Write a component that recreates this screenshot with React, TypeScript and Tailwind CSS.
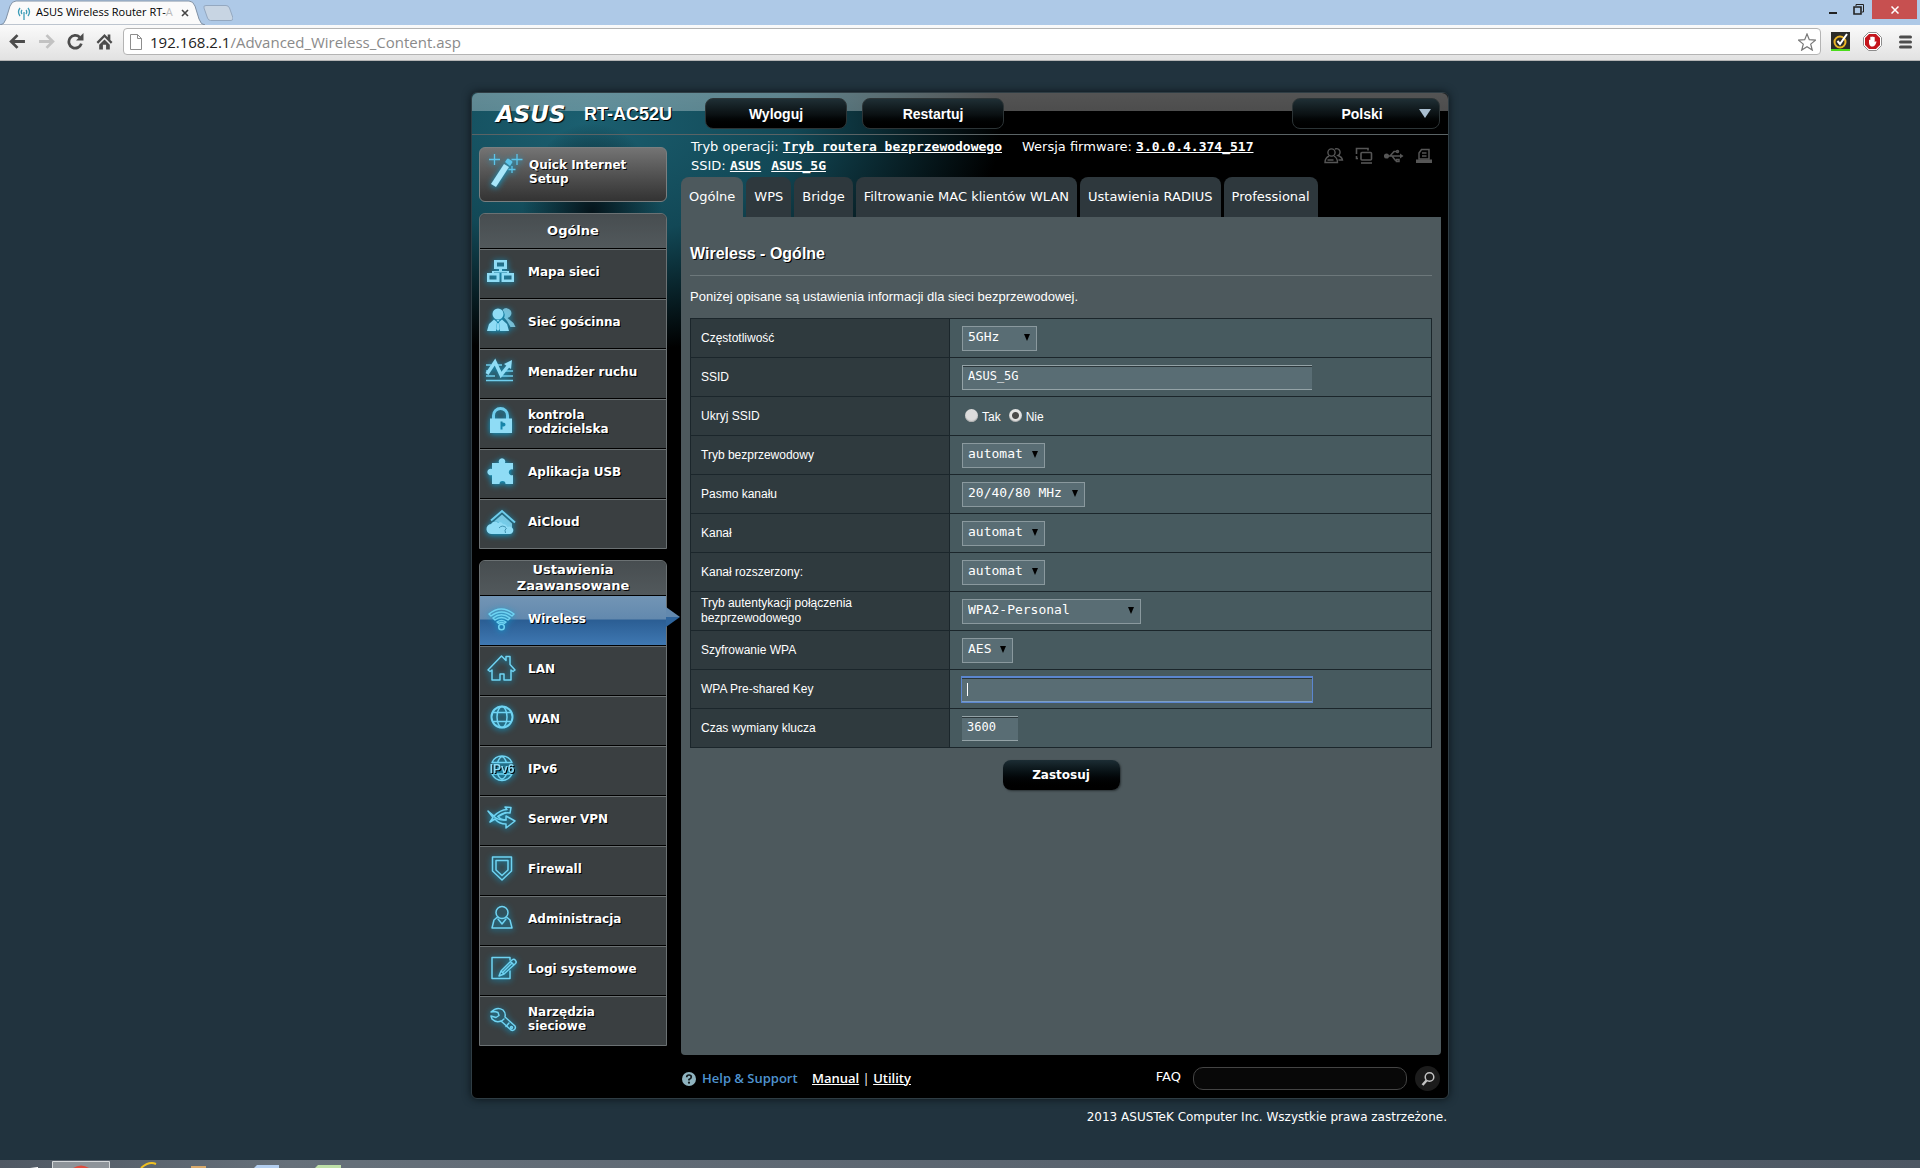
import type { ReactNode } from "react";
import clsx from "clsx";

const verdana = "font-['DejaVu_Sans',sans-serif]";
const arial = "font-['Liberation_Sans',sans-serif]";
const lucida = "font-['DejaVu_Sans_Mono',monospace]";
const segoe = "font-['Open_Sans',sans-serif]";

const shadow = "[text-shadow:1px_1px_0_#000]";
const glow = "size-[30px] shrink-0 overflow-visible drop-shadow-[0_1px_3px_#0aa5d8]";

function SolidIcon({ children }: { children: ReactNode }) {
  return (
    <svg viewBox="0 0 30 30" className={glow} fill="#8fdcf5" aria-hidden="true">
      {children}
    </svg>
  );
}

function LineIcon({ children }: { children: ReactNode }) {
  return (
    <svg
      viewBox="0 0 30 30"
      className={glow}
      fill="none"
      stroke="#6fd3f2"
      strokeWidth="1.5"
      strokeLinejoin="round"
      strokeLinecap="round"
      aria-hidden="true"
    >
      {children}
    </svg>
  );
}

const WandIcon = () => (
  <svg viewBox="0 0 34 36" className="h-9 w-[34px] shrink-0 overflow-visible drop-shadow-[0_1px_3px_#0aa5d8]" aria-hidden="true">
    <path d="M3 30 16 10l5 3L8 33z" fill="#a9e6fa" />
    <path d="m17 8 2-3q1-1 2 0l3 2q1 1 0 2l-2 3z" fill="#5cc4ea" />
    <path d="M6.500 0v11M1 5.500h11M29 0v11M23.500 5.500h11M24 12v7M20.500 15.500h7" stroke="#5cc4ea" strokeWidth="1.300" />
  </svg>
);

const general = [
  {
    label: "Mapa sieci",
    icon: (
      <SolidIcon>
        <path fillRule="evenodd" d="M8 3h13v9h-5v2h7v2h5v9H15.500v-9H21v-.5H8v.5h5.500v9H1v-9h5v-2h7v-2H8zm3 2.500V9.500h7V5.500zM3.500 18.500v4h7v-4zm14.500 0v4h7.500v-4z" />
      </SolidIcon>
    ),
  },
  {
    label: "Sieć gościnna",
    icon: (
      <SolidIcon>
        <path d="M16.500 3a5 5 0 1 1 5 8l6 5 2 4h-5l-3.500-6-3-3.500q2-4-1.500-7.500z" opacity=".75" />
        <circle cx="12" cy="7" r="5.500" />
        <path d="M8 12.500 3 17l-2 7h9l1-9zM16 12.500l5 4.500 2 7h-9l-1-9z" />
        <path d="m10.500 13 1.500 2 1.500-2zM11.300 16h1.400l1 6-1.700 2-1.700-2z" />
      </SolidIcon>
    ),
  },
  {
    label: "Menadżer ruchu",
    icon: (
      <SolidIcon>
        <path d="M0 8h5M11 8h5M0 14h2M12 14h3M19 14h8M0 19h9M16 19h11M0 23.500h27" stroke="#6fcdec" strokeWidth="1.600" />
        <path d="m1 17 8-12 6 13 8-10" stroke="#8fdcf5" strokeWidth="3.500" fill="none" />
        <path d="m18 7 8-4-1 9z" />
      </SolidIcon>
    ),
  },
  {
    label: "kontrola rodzicielska",
    icon: (
      <SolidIcon>
        <path d="M7.500 12V8.500a7 7 0 0 1 14 0V12" fill="none" stroke="#6fcdec" strokeWidth="3" />
        <path fillRule="evenodd" d="M4 11.500h22V26H4zm10.500 3v8h2v-3q3 0 3-2t-3-2v-1z" />
      </SolidIcon>
    ),
  },
  {
    label: "Aplikacja USB",
    icon: (
      <SolidIcon>
        <path d="M6 6h7a3.300 3.300 0 1 1 6 0h8v6.500a3 3 0 1 0 0 5.500v9h-7.500a3 3 0 1 0-6 0H6v-9a3.300 3.300 0 1 1 0-6z" />
      </SolidIcon>
    ),
  },
  {
    label: "AiCloud",
    icon: (
      <SolidIcon>
        <path d="m5 13.500 11-9.500 13 11.500" fill="none" stroke="#6fcdec" strokeWidth="2" />
        <path d="m8 14.500 8-7 10 9V21l-9-1-4-5z" opacity=".8" />
        <path d="M6 27a5 5 0 0 1-1-10q3-4 7-1.500 3-1.500 5 1.500 3 0 4.500 3a3.800 3.800 0 1 1 2.500 7z" />
        <path d="M13 21q3-3.500 7-.5M19.500 26q-1.500-3 1-5" fill="none" stroke="#2b7f9e" strokeWidth=".8" />
      </SolidIcon>
    ),
  },
];

const advanced = [
  {
    label: "Wireless",
    active: true,
    icon: (
      <LineIcon>
        <path d="M3 10q12-10 25 0l-2 2q-10.500-8-21 0zM7 14q8.500-6.500 17 0l-2 2q-6.500-5-13 0zM11 18q4.500-3 9 0l-1.500 1.300q-3-1.500-6 0z" />
        <circle cx="15.500" cy="23" r="2.800" />
      </LineIcon>
    ),
  },
  {
    label: "LAN",
    icon: (
      <LineIcon>
        <path d="M2 16 15.500 2l4.500 4.500V2.500h4v8l5 5.500-2 1.500-2-1.500v10h-7v-6h-4v6H6V16l-2 1.500z" />
      </LineIcon>
    ),
  },
  {
    label: "WAN",
    icon: (
      <LineIcon>
        <circle cx="16" cy="13" r="10.500" strokeWidth="2" />
        <ellipse cx="16" cy="13" rx="5" ry="10.500" />
        <path d="M7.500 8.500h17M7.500 17.500h17" />
      </LineIcon>
    ),
  },
  {
    label: "IPv6",
    icon: (
      <LineIcon>
        <path d="M6 8.500a11 11 0 0 1 20 0M6 20a11 11 0 0 0 20 0M11.500 8.500Q16-3 20.500 8.500M11.500 20q4.500 10 9 0M6 8.500h20M6 20h20" />
        <text
          x="16"
          y="18.500"
          textAnchor="middle"
          fill="#8fdcf5"
          stroke="none"
          fontFamily="Liberation Sans, sans-serif"
          fontWeight="700"
          fontSize="12"
        >
          IPv6
        </text>
      </LineIcon>
    ),
  },
  {
    label: "Serwer VPN",
    icon: (
      <LineIcon>
        <path d="m2 7 6 5q6-6 13-6.500L19 3l6 .5L24 9q-7-1-12 3.500 3 3.500 8 3.500v-4l9 5-9 7v-4q-7 0-11-5l-5 3 3-4.500z" />
        <path d="M8 12.500q4 4 12 3.500M12 12.500l8-4" />
      </LineIcon>
    ),
  },
  {
    label: "Firewall",
    icon: (
      <LineIcon>
        <path d="M6.500 3h19v14L16 26l-9.500-9z" />
        <path d="M10 6.500h12V16l-6 5.500-6-5.500z" />
      </LineIcon>
    ),
  },
  {
    label: "Administracja",
    icon: (
      <LineIcon>
        <circle cx="16" cy="8.500" r="6" />
        <path d="M11.500 13 8 16l-2 8h20l-2-8-3.500-3M12 15l4 5 4-5" />
      </LineIcon>
    ),
  },
  {
    label: "Logi systemowe",
    icon: (
      <LineIcon>
        <path d="M22 3.500H6v21h18V17M24 6V3.500h-2" />
        <path d="m13 22 2-5L26 6q2-1.500 3.500.5Q31 8 29.500 9.500L18 20zM15 17l3 3M24.500 7.500l3.500 3.500M17 18 25.500 9.500" />
      </LineIcon>
    ),
  },
  {
    label: "Narzędzia sieciowe",
    icon: (
      <LineIcon>
        <path d="M5 8q6-6 12-2 3 3 2 7l10 9q1 2-.5 3.500t-3.500.5l-10-9q-5 2-9-2l-1-3 5 1.500 3-2-1-3-3-1z" />
        <path d="m18 15-3 2.500M23 19l-3 3.500" />
        <circle cx="25.500" cy="23.500" r="1" />
      </LineIcon>
    ),
  },
];

type MenuItem = { label: string; icon: ReactNode; active?: boolean };

function SideMenu({ title, items }: { title: string; items: MenuItem[] }) {
  return (
    <section className="rounded-t-md border border-[#6b7173] bg-[#3a3f41]">
      <h2
        className={clsx(
          "flex h-[34px] items-center justify-center rounded-t-md bg-linear-to-b from-[#474d50] to-[#52595c] px-5 text-center text-[13px] leading-4 font-bold text-white",
          shadow
        )}
      >
        {title}
      </h2>
      <ul>
        {items.map((item) => (
          <li key={item.label} className="relative">
            <a
              href="#"
              className={clsx(
                "flex h-[50px] items-center gap-3 border-t border-black pr-6 pb-1 pl-1.5 text-xs leading-[14px] font-bold text-white",
                item.active
                  ? "bg-[linear-gradient(#7295b5_0,#6389ae_46%,#2b5e94_50%,#3f78b2_100%)]"
                  : "shadow-[inset_0_1px_0_#6b7173]",
                shadow
              )}
            >
              {item.icon}
              <span>{item.label}</span>
            </a>
            {item.active && (
              <svg viewBox="0 0 14 20" className="absolute top-3 left-full h-5 w-3.5" aria-hidden="true">
                <path d="M0 0 14 10H0z" fill="#6389ae" />
                <path d="M0 20 14 10H0z" fill="#2f659d" />
              </svg>
            )}
          </li>
        ))}
      </ul>
    </section>
  );
}

const topButton =
  "h-[31px] rounded-lg border border-[#2c3436] bg-linear-to-b from-[#1f2f35] via-[#0a1012] via-55% to-black text-sm font-bold text-white";

function Header() {
  return (
    <header className="flex h-[42px] items-center rounded-t-md border-b border-[#5a6365] bg-[linear-gradient(rgba(255,255,255,0.33)_0,rgba(255,255,255,0.3)_18px,transparent_18px)] pr-2 pl-6">
      <span className={clsx(verdana, "w-[88px] text-[23px] leading-6 font-bold text-white italic [text-shadow:1px_1px_1px_#000]")}>ASUS</span>
      <span className={clsx(arial, shadow, "w-[121px] text-lg font-bold text-white")}>RT-AC52U</span>
      <button type="button" className={clsx(arial, topButton, "mr-[15px] w-[142px]")}>
        Wyloguj
      </button>
      <button type="button" className={clsx(arial, topButton, "w-[142px]")}>
        Restartuj
      </button>
      <button type="button" className={clsx(arial, topButton, "relative ml-auto w-[148px]")}>
        <span className="pr-2">Polski</span>
        <svg viewBox="0 0 12 9" className="absolute top-2.5 right-2 h-[9px] w-3" aria-hidden="true">
          <path d="M0 0h12L6 9z" fill="#a9bed0" />
        </svg>
      </button>
    </header>
  );
}

function StatusIcons() {
  return (
    <div className="mt-3 mr-2 flex gap-[11px]" aria-hidden="true">
      <svg viewBox="0 0 20 18" className="h-[18px] w-5" fill="none" stroke="#565656" strokeWidth="1.400">
        <circle cx="7.500" cy="5.500" r="3.600" />
        <path d="M5 9q-4 2-4 6.500h12.500Q13.500 11 10 9M11 2a3.300 3.300 0 1 1 3 6.500q4 1.500 4.500 4.500h-4M3.500 13h6" />
      </svg>
      <svg viewBox="0 0 18 18" className="size-[18px]" fill="none" stroke="#565656" strokeWidth="1.600">
        <path d="M3 11.500H1.500V9M1.500 7V1.500H13v2" />
        <rect x="6" y="5.500" width="10.500" height="7.500" rx="1" />
        <path d="M6 16h11" />
      </svg>
      <svg viewBox="0 0 20 18" className="h-[18px] w-5" fill="none" stroke="#565656" strokeWidth="1.500">
        <path d="M3 9h14M6 9l4-4.500h3M8 9l3.500 4.500H13" />
        <circle cx="2.500" cy="9" r="1.800" fill="#565656" />
        <path d="m16 6.500 3.500 2.500-3.500 2.500z" fill="#565656" stroke="none" />
        <circle cx="13.500" cy="4.500" r="1" />
        <path d="M12.500 12.500h2.500v2h-2.500z" />
      </svg>
      <svg viewBox="0 0 18 18" className="size-[18px]" fill="none" stroke="#565656" strokeWidth="1.500">
        <path d="M4 12V6l2.500-3.500H14V12zM7 6h4.500M7 9h4.500" />
        <path d="M1 12.500h16V16H1z" fill="#565656" stroke="none" />
      </svg>
    </div>
  );
}

function InfoBar() {
  const link = clsx(lucida, "font-bold underline");
  return (
    <div className="flex h-[42px] items-start justify-between pl-2.5 text-[13px] leading-[19px] text-white">
      <div className="pt-0.5">
        <p>
          Tryb operacji:{" "}
          <a href="#" className={link}>
            Tryb routera bezprzewodowego
          </a>
          <span className="ml-5">Wersja firmware: </span>
          <a href="#" className={link}>
            3.0.0.4.374_517
          </a>
        </p>
        <p>
          SSID:{" "}
          <a href="#" className={link}>
            ASUS
          </a>
          <a href="#" className={clsx(link, "ml-2.5")}>
            ASUS_5G
          </a>
        </p>
      </div>
      <StatusIcons />
    </div>
  );
}

const tabs = ["Ogólne", "WPS", "Bridge", "Filtrowanie MAC klientów WLAN", "Ustawienia RADIUS", "Professional"];

function Tabs() {
  return (
    <nav className="flex gap-[3px]">
      {tabs.map((tab, i) => (
        <a
          key={tab}
          href="#"
          className={clsx(
            "flex h-10 items-center rounded-t-lg px-2 text-[13px] whitespace-nowrap text-white",
            i === 0 ? "bg-[#4d595d]" : "bg-[#2e383d]"
          )}
        >
          {tab}
        </a>
      ))}
    </nav>
  );
}

function Row({ label, htmlFor, children }: { label: string; htmlFor?: string; children: ReactNode }) {
  return (
    <tr className="h-[39px]">
      <th
        scope="row"
        className={clsx(arial, "w-[259px] border border-[#1b262b] bg-[#2f3a3e] pr-20 pl-2.5 text-left text-xs leading-[15px] font-normal text-white")}
      >
        <label htmlFor={htmlFor}>{label}</label>
      </th>
      <td className="border border-[#1b262b] bg-[#475a5f] pl-3">{children}</td>
    </tr>
  );
}

function Select({ id, options, className }: { id: string; options: string[]; className: string }) {
  return (
    <div className={clsx("relative h-[25px]", className)}>
      <select
        id={id}
        className={clsx(lucida, "block h-full w-full appearance-none border border-[#8a999e] bg-[#596d74] pb-0.5 pl-[5px] text-[13px] text-white")}
      >
        {options.map((o) => (
          <option key={o}>{o}</option>
        ))}
      </select>
      <svg viewBox="0 0 6 7" className="pointer-events-none absolute top-2 right-[7px] h-[7px] w-1.5" aria-hidden="true">
        <path d="M0 0h6L3 7z" fill="#000" />
      </svg>
    </div>
  );
}

const field =
  "block h-[25px] border-y bg-[#596d74] pb-0.5 pl-[5px] text-xs text-white outline-none shadow-[inset_0_1px_0_#2b373b]";
const radio =
  "mb-0.5 size-[13px] appearance-none rounded-full bg-[#dcdcdc] shadow-[inset_0_-1px_1px_#aaa] checked:bg-[radial-gradient(#4a4a4a_0_3px,#e4e4e4_4px)]";

function SettingsTable() {
  return (
    <table className="mt-3 w-full border-collapse">
      <tbody>
        <Row label="Częstotliwość" htmlFor="band">
          <Select id="band" options={["5GHz", "2.4GHz"]} className="w-[75px]" />
        </Row>
        <Row label="SSID" htmlFor="ssid">
          <input id="ssid" defaultValue="ASUS_5G" className={clsx(lucida, field, "w-[350px] max-w-full border-l border-[#94a3a7]")} />
        </Row>
        <Row label="Ukryj SSID">
          <div className={clsx(arial, "flex items-center pl-[3px] text-xs text-white")}>
            <input type="radio" id="hide-yes" name="hide" className={radio} />
            <label htmlFor="hide-yes" className="pt-0.5 pr-2 pl-1">
              Tak
            </label>
            <input type="radio" id="hide-no" name="hide" defaultChecked className={radio} />
            <label htmlFor="hide-no" className="pt-0.5 pl-1">
              Nie
            </label>
          </div>
        </Row>
        <Row label="Tryb bezprzewodowy" htmlFor="mode">
          <Select id="mode" options={["automat"]} className="w-[83px]" />
        </Row>
        <Row label="Pasmo kanału" htmlFor="width">
          <Select id="width" options={["20/40/80 MHz"]} className="w-[123px]" />
        </Row>
        <Row label="Kanał" htmlFor="channel">
          <Select id="channel" options={["automat"]} className="w-[83px]" />
        </Row>
        <Row label="Kanał rozszerzony:" htmlFor="ext-channel">
          <Select id="ext-channel" options={["automat"]} className="w-[83px]" />
        </Row>
        <Row label="Tryb autentykacji połączenia bezprzewodowego" htmlFor="auth">
          <Select id="auth" options={["WPA2-Personal"]} className="w-[179px]" />
        </Row>
        <Row label="Szyfrowanie WPA" htmlFor="crypto">
          <Select id="crypto" options={["AES"]} className="w-[51px]" />
        </Row>
        <Row label="WPA Pre-shared Key" htmlFor="psk">
          <div className="relative w-[350px] max-w-full">
            <input
              id="psk"
              autoFocus
              className={clsx(lucida, field, "w-full border-t-[#5b86cf] border-b-[#7d9fc4] caret-transparent ring-1 ring-[#5b86cf]")}
            />
            <span className="absolute top-[6px] left-[5px] h-[13px] w-px bg-white" />
          </div>
        </Row>
        <Row label="Czas wymiany klucza" htmlFor="rekey">
          <input id="rekey" defaultValue="3600" className={clsx(lucida, field, "w-[56px] border-[#94a3a7]")} />
        </Row>
      </tbody>
    </table>
  );
}

function Footer() {
  return (
    <footer className="flex h-[43px] items-center pr-2 pl-[210px] text-[13px] text-white">
      <svg viewBox="0 0 14 14" className="mt-1 mr-1.5 size-[14px]" aria-hidden="true">
        <circle cx="7" cy="7" r="7" fill="#8fb3bf" />
        <path d="M4.700 5.300q0-2.300 2.300-2.300t2.300 2q0 1.500-2.300 2.500v1" fill="none" stroke="#10181b" strokeWidth="1.700" />
        <circle cx="7" cy="10.700" r="1.100" fill="#10181b" />
      </svg>
      <span className={clsx(segoe, "mt-1 w-[110px] font-semibold text-[#4f93cf]")}>Help &amp; Support</span>
      <span className={clsx(segoe, "mt-1")}>
        <a href="#" className="font-semibold underline">
          Manual
        </a>{" "}
        |{" "}
        <a href="#" className="font-semibold underline">
          Utility
        </a>
      </span>
      <label htmlFor="faq" className="mr-3 ml-auto">
        FAQ
      </label>
      <input id="faq" className="mt-1 h-[23px] w-[214px] rounded-[10px] border border-[#444] bg-[#080808] px-2 text-xs outline-none" />
      <button type="button" aria-label="Szukaj" className="mt-1 ml-2 flex size-[25px] items-center justify-center rounded-full bg-[#1c1c1c]">
        <svg viewBox="0 0 16 16" className="size-4" fill="none" stroke="#c4c4c4" aria-hidden="true">
          <circle cx="9.500" cy="6" r="4.300" strokeWidth="1.500" />
          <path d="M6.500 9.500 2.500 14" strokeWidth="2.500" />
        </svg>
      </button>
    </footer>
  );
}

function Browser() {
  return (
    <div className={segoe}>
      <div className="flex h-[25px] items-start bg-[#aec9e7]">
        <div className="relative h-[25px] w-[205px]">
          <svg viewBox="0 0 205 25" className="absolute inset-0 size-full" aria-hidden="true">
            <path d="M0 25q4 0 6-6l4-13q2-5 6-5h173q4 0 6 5l4 13q2 6 6 6z" fill="#fafafa" stroke="#8091a5" />
          </svg>
          <div className="relative flex h-[25px] items-center pl-[17px]">
            <svg viewBox="0 0 14 14" className="mr-[5px] size-[14px]" fill="none" stroke="#3d9db8" strokeWidth="1.300" aria-hidden="true">
              <path d="M3 2Q0 6 3 10M11 2q3 4 0 8M5 4Q3.500 6 5 8M9 4q1.500 2 0 4M7 6v8" />
            </svg>
            <span className="w-[138px] text-[11px] whitespace-nowrap text-black">
              ASUS Wireless Router RT-<span className="text-[#bbb]">A</span>
            </span>
            <button type="button" aria-label="Zamknij kartę" className="ml-[7px]">
              <svg viewBox="0 0 8 8" className="size-2" stroke="#444" strokeWidth="1.600" aria-hidden="true">
                <path d="m1 1 6 6M7 1 1 7" />
              </svg>
            </button>
          </div>
        </div>
        <svg viewBox="0 0 30 16" className="mt-[5px] -ml-0.5 h-4 w-[30px]" aria-hidden="true">
          <path d="M1 3q-1-2.500 2-2.500h20q2.500 0 3.500 2.500L30 13q0 2.500-2 2.500H7.500q-2 0-3-2.500z" fill="#c8d5e3" stroke="#94a8c0" />
        </svg>
        <div className="mr-[3px] ml-auto flex h-[19px] items-center">
          <button type="button" aria-label="Minimalizuj" className="mt-1.5 h-0.5 w-2 bg-[#222]" />
          <button type="button" aria-label="Przywróć" className="mr-2 ml-4">
            <svg viewBox="0 0 11 11" className="block size-[11px]" fill="none" stroke="#222" aria-hidden="true">
              <path d="M3 2V.5h7.500V8H9" />
              <path d="M1 3h7v7H1z" strokeWidth="1.600" />
            </svg>
          </button>
          <button type="button" aria-label="Zamknij" className="flex h-[19px] w-[45px] items-center justify-center bg-[#c75050]">
            <svg viewBox="0 0 8 8" className="size-2" stroke="#fff" strokeWidth="1.500" aria-hidden="true">
              <path d="m.5.5 7 7M7.500.5l-7 7" />
            </svg>
          </button>
        </div>
      </div>
      <div className="flex h-9 items-center border-b border-[#b5b5b5] bg-linear-to-b from-[#fafafa] to-[#e2e2e2] pr-1 pb-0.5 pl-[9px]">
        <div className="flex w-[114px] gap-3 text-[#4c4c4c]">
          <svg viewBox="0 0 16 16" className="size-[17px]" fill="none" stroke="currentColor" strokeWidth="2.600" aria-hidden="true">
            <path d="M15 8H2M8 2 2 8l6 6" />
          </svg>
          <svg viewBox="0 0 16 16" className="size-[17px]" fill="none" stroke="#c2c2c2" strokeWidth="2.600" aria-hidden="true">
            <path d="M1 8h13M8 2l6 6-6 6" />
          </svg>
          <svg viewBox="0 0 16 16" className="size-[17px]" fill="none" stroke="currentColor" strokeWidth="2.600" aria-hidden="true">
            <path d="M13.500 10A6 6 0 1 1 12 4" />
            <path d="M15.500 0v7H8.500z" fill="currentColor" stroke="none" />
          </svg>
          <svg viewBox="0 0 16 16" className="size-[17px]" fill="currentColor" aria-hidden="true">
            <path d="M8 1 .5 8.500 2 10l6-6 6 6 1.500-1.500L13.500 6.500V1.500h-2.500V4zM8 6l-5 5v4.500h3.500V11h3v4.500H13V11z" />
          </svg>
        </div>
        <div className="flex h-[27px] flex-1 items-center rounded-sm border border-[#b4b4b4] bg-white pr-1 pl-1.5">
          <svg viewBox="0 0 12 16" className="mr-2 h-4 w-3" fill="none" stroke="#8d8d8d" aria-hidden="true">
            <path d="M.5.5h7l4 4v11H.5zM7.500.5v4h4" />
          </svg>
          <span className="flex-1 text-[15px] leading-5 text-[#8a8a8a]">
            <span className="text-[#222]">192.168.2.1</span>/Advanced_Wireless_Content.asp
          </span>
          <svg viewBox="0 0 18 18" className="size-[18px]" fill="#fff" stroke="#777" strokeWidth="1.200" aria-hidden="true">
            <path d="m9 1 2.300 5.700 6.200.4-4.800 4 1.600 6L9 13.800l-5.300 3.300 1.600-6-4.800-4 6.200-.4z" />
          </svg>
        </div>
        <svg viewBox="0 0 19 19" className="ml-2.5 size-[19px]" aria-hidden="true">
          <path d="M0 0h19v19H0z" fill="#2b2b28" />
          <circle cx="9" cy="10" r="5.500" fill="none" stroke="#eab526" strokeWidth="2" />
          <path d="m6.500 9 2.500 3L16 2" fill="none" stroke="#fff" strokeWidth="2" />
          <path d="M0 17h19v2H0z" fill="#4bdc1c" />
        </svg>
        <svg viewBox="0 0 19 19" className="mx-[13px] size-[19px]" aria-hidden="true">
          <path d="M5.500.5h8l5 5v8l-5 5h-8l-5-5v-8z" fill="#fff" stroke="#8c8c8c" />
          <path d="M6 2h7l4 4v7l-4 4H6l-4-4V6z" fill="#c4151c" />
          <path d="M6 8q.7-.6 1.300 0V5q.8-.8 1.400 0 .7-1 1.500 0 .8-.6 1.500.3V10q1.500-1.500 1.800-.3-1 4-3.500 4.800H8Q6 13 6 11z" fill="#fff" />
        </svg>
        <svg viewBox="0 0 13 14" className="mx-1 h-3.5 w-[13px]" stroke="#4c4c4c" strokeWidth="3" strokeLinecap="round" aria-hidden="true">
          <path d="M1.500 2h10M1.500 7h10M1.500 12h10" />
        </svg>
      </div>
    </div>
  );
}

function Taskbar() {
  return (
    <div className="flex h-2 items-start overflow-hidden bg-linear-to-r from-[#4f5863] via-[#66707a] via-15% to-[#4d5763]">
      <svg viewBox="0 0 360 8" className="h-2 w-[360px]" aria-hidden="true">
        <path d="m30 8 8-1v1z" fill="#fff" />
        <path d="M52.500 8V1.500h57V8" fill="#8d9399" stroke="#d5d8da" />
        <path d="M73 8q8-5 16 0z" fill="#dd4b3e" />
        <path d="M141 8q8-7 15-4" fill="none" stroke="#f0c022" strokeWidth="2" />
        <path d="M191 6h15v2h-15z" fill="#d8a96b" />
        <path d="m254 8 3-3h22v3z" fill="#b4cff0" />
        <path d="m315 8 3-3h23v3z" fill="#bfe0a8" />
      </svg>
    </div>
  );
}

export default function App() {
  return (
    <div className={clsx(verdana, "flex min-h-screen flex-col bg-[#21333e]")}>
      <Browser />
      <main className="flex-1 px-4 pt-[31px]">
        <div className="mx-auto w-full max-w-[978px]">
          <div className="rounded-md border border-[#2f3d44] bg-black bg-[radial-gradient(ellipse_70px_90px_at_120px_120px,#05141a_0,transparent_100%),radial-gradient(ellipse_420px_230px_at_110px_30px,#1b5f70_0,#124856_50%,transparent_100%)] shadow-[0_0_8px_#0b151a]">
            <Header />
            <div className="flex gap-3.5 pr-[7px] pl-[7px]">
              <aside className="flex w-[188px] shrink-0 flex-col gap-[11px] pt-3 pb-[9px]">
                <a
                  href="#"
                  className={clsx(
                    "flex h-[55px] items-start gap-[7px] rounded-md border border-[#7b7f80] bg-linear-to-b from-[#747474] to-[#333] pt-1.5 pr-8 pl-2 text-xs leading-[14px] font-bold text-white",
                    shadow
                  )}
                >
                  <WandIcon />
                  <span className="pt-1">Quick Internet Setup</span>
                </a>
                <SideMenu title="Ogólne" items={general} />
                <SideMenu title="Ustawienia Zaawansowane" items={advanced} />
              </aside>
              <div className="flex min-w-0 flex-1 flex-col">
                <InfoBar />
                <Tabs />
                <section className="flex-1 rounded-b-sm bg-[#4d595d] px-[9px] pt-[27px] text-white">
                  <h1 className={clsx(arial, shadow, "border-b border-[#6d787b] pb-[11px] text-base leading-5 font-bold")}>Wireless - Ogólne</h1>
                  <p className={clsx(arial, "mt-3 text-[13px] leading-[18px]")}>
                    Poniżej opisane są ustawienia informacji dla sieci bezprzewodowej.
                  </p>
                  <SettingsTable />
                  <div className="mt-3 text-center">
                    <button
                      type="button"
                      className="h-[30px] w-[117px] rounded-lg bg-linear-to-b from-[#1c2d34] to-black text-xs font-bold shadow-[1px_1px_2px_#2b3336]"
                    >
                      Zastosuj
                    </button>
                  </div>
                </section>
              </div>
            </div>
            <Footer />
          </div>
          <p className="mt-2.5 mr-0.5 text-right text-xs leading-4 text-white">
            2013 ASUSTeK Computer Inc. Wszystkie prawa zastrzeżone.
          </p>
        </div>
      </main>
      <Taskbar />
    </div>
  );
}
